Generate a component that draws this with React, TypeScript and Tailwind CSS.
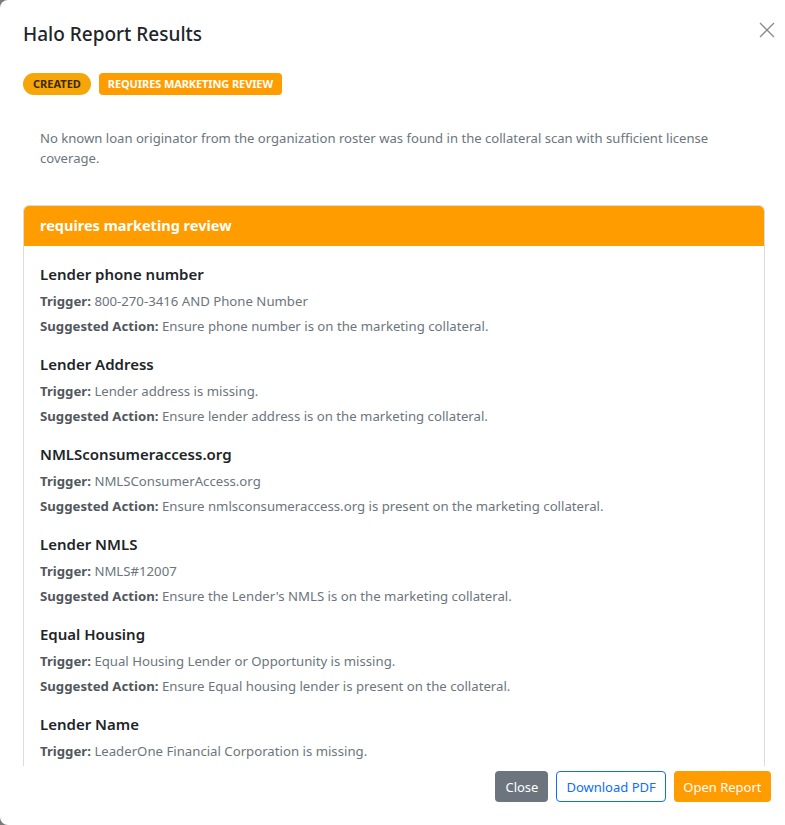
import React from "react";

const items = [
  {
    title: "Lender phone number",
    trigger: "800-270-3416 AND Phone Number",
    action: "Ensure phone number is on the marketing collateral.",
  },
  {
    title: "Lender Address",
    trigger: "Lender address is missing.",
    action: "Ensure lender address is on the marketing collateral.",
  },
  {
    title: "NMLSconsumeraccess.org",
    trigger: "NMLSConsumerAccess.org",
    action: "Ensure nmlsconsumeraccess.org is present on the marketing collateral.",
  },
  {
    title: "Lender NMLS",
    trigger: "NMLS#12007",
    action: "Ensure the Lender's NMLS is on the marketing collateral.",
  },
  {
    title: "Equal Housing",
    trigger: "Equal Housing Lender or Opportunity is missing.",
    action: "Ensure Equal housing lender is present on the collateral.",
  },
  {
    title: "Lender Name",
    trigger: "LeaderOne Financial Corporation is missing.",
    action: "Ensure LeaderOne Financial Corporation is present on the collateral.",
  },
];

export default function App() {
  return (
    <div
      className="h-[825px] w-[785px] bg-[#7a7a7a] overflow-hidden"
      style={{ fontFamily: '"Noto Sans", "Open Sans", sans-serif' }}
    >
      <div className="h-full w-full bg-white rounded-l-[8px] flex flex-col">
        {/* Header */}
        <div className="relative px-[23px] pt-[21px] h-[60px] shrink-0">
          <h1 className="text-[19px] leading-[26px] text-[#212529] font-medium">Halo Report Results</h1>
          <button className="absolute right-[10px] top-[22px] w-[16px] h-[16px] text-[#8a8a8a]">
            <svg viewBox="0 0 16 16" width="16" height="16" fill="none" stroke="currentColor" strokeWidth="1.3">
              <path d="M1 1L15 15M15 1L1 15" />
            </svg>
          </button>
        </div>

        {/* Body */}
        <div className="flex-1 overflow-hidden px-[23px] pr-[20px]">
          <div className="flex gap-[8px] mt-[13px]">
            <span className="h-[22px] px-[10px] rounded-full bg-[#f6a609] text-[#3a2a00] text-[11px] font-bold flex items-center">
              CREATED
            </span>
            <span className="h-[22px] px-[9px] rounded-[4px] bg-[#ff9d00] text-white text-[11px] font-bold flex items-center tracking-[-0.1px]">
              REQUIRES MARKETING REVIEW
            </span>
          </div>
          <p className="mt-[33px] px-[17px] text-[13.1px] leading-[20px] text-[#6c757d]">
            No known loan originator from the organization roster was found in the collateral scan with sufficient license coverage.
          </p>
          <div className="mt-[37px] rounded-[6px] border border-[#dcdcdc] overflow-hidden">
            <div className="h-[40px] bg-[#ff9c00] px-[16px] flex items-center text-white text-[14.5px] font-bold">
              requires marketing review
            </div>
            <div className="px-[16px] pt-[17px]">
              {items.map((it) => (
                <div key={it.title} className="pb-[12px]">
                  <div className="text-[15px] leading-[22px] font-semibold text-[#212529] mb-[6px]">{it.title}</div>
                  <div className="text-[13.2px] leading-[20px] text-[#6c757d] mb-[5px]">
                    <span className="font-bold text-[#51575d]">Trigger:</span> {it.trigger}
                  </div>
                  <div className="text-[13.2px] leading-[20px] text-[#6c757d] mb-[5px]">
                    <span className="font-bold text-[#51575d]">Suggested Action:</span> {it.action}
                  </div>
                </div>
              ))}
            </div>
          </div>
        </div>

        {/* Footer */}
        <div className="h-[59px] shrink-0 flex justify-end items-start gap-[8px] pt-[5px] pr-[14px]">
          <button className="h-[31px] px-[10px] rounded-[4px] bg-[#6c757d] text-white text-[13px] leading-[20px]">Close</button>
          <button className="h-[31px] px-[9px] rounded-[4px] border border-[#0d6efd] bg-white text-[#0d6efd] text-[13px] leading-[20px]">
            Download PDF
          </button>
          <button className="h-[31px] px-[9.5px] rounded-[4px] bg-[#ff9c00] text-white text-[13px] leading-[20px]">Open Report</button>
        </div>
      </div>
    </div>
  );
}
